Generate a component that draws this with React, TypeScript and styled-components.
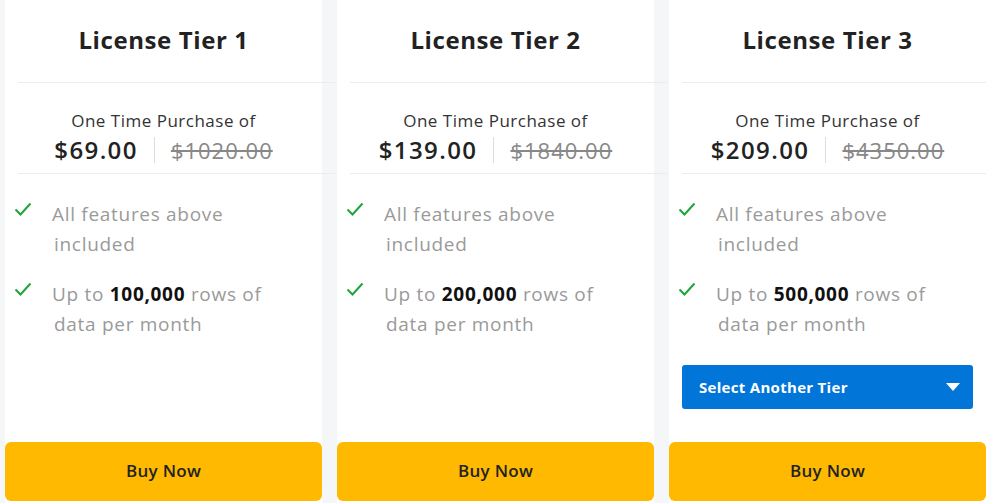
import styled, { createGlobalStyle } from 'styled-components';

const GlobalStyle = createGlobalStyle`
  html, body {
    margin: 0;
    padding: 0;
    background: #f5f6f8;
    overflow: hidden;
  }
  body {
    font-family: 'Open Sans', 'Liberation Sans', sans-serif;
  }
`;

const Page = styled.div`
  display: flex;
  flex-direction: row;
  gap: 15px;
  height: 503px;
  padding-left: 5px;
  box-sizing: border-box;
  background-color: #f5f6f8;
`;

const Card = styled.div`
  display: flex;
  flex-direction: column;
  flex: 0 0 317px;
  width: 317px;
  background-color: #fff;
`;

const Header = styled.div`
  display: flex;
  align-items: center;
  justify-content: center;
  height: 82px;
  padding-bottom: 4px;
  box-sizing: border-box;
`;

const Title = styled.h2`
  margin: 0;
  font-size: 24px;
  font-weight: 700;
  color: #222;
  letter-spacing: 0.6px;
`;

const Divider = styled.div`
  position: relative;
  z-index: 1;
  margin-left: 13px;
  width: 100%;
  height: 1px;
  background-color: #ececec;
`;

const PriceBlock = styled.div`
  display: flex;
  flex-direction: column;
  align-items: center;
  padding: 28px 0 9px;
`;

const Caption = styled.span`
  font-size: 17px;
  line-height: 20px;
  color: #333;
  letter-spacing: 0.5px;
`;

const PriceRow = styled.div`
  display: flex;
  flex-direction: row;
  align-items: center;
  margin-top: 5px;
  height: 28px;
`;

const Price = styled.span`
  font-size: 24px;
  font-weight: 600;
  color: #222;
  letter-spacing: 1.4px;
  padding-right: 16px;
  border-right: 1px solid #ddd;
  line-height: 26px;
`;

const OldPrice = styled.span`
  font-size: 22px;
  color: #888;
  letter-spacing: 1px;
  padding-left: 16px;
  text-decoration: line-through;
  line-height: 26px;
`;

const Features = styled.ul`
  display: flex;
  flex-direction: column;
  gap: 20px;
  list-style: none;
  margin: 0;
  padding: 25px 9px 0;
`;

const Feature = styled.li`
  display: flex;
  flex-direction: row;
  align-items: flex-start;
  gap: 20px;
`;

const Check = styled.svg`
  flex: 0 0 18px;
  margin-top: 3px;
`;

const FeatureText = styled.span`
  font-size: 19px;
  line-height: 30px;
  letter-spacing: 0.7px;
  color: #9a9a9a;
  padding-left: 2px;
  text-indent: -2px;

  & b {
    color: #111;
    font-weight: 700;
  }
`;

const Select = styled.button`
  display: flex;
  align-items: center;
  justify-content: space-between;
  margin: 26px 13px 0;
  height: 44px;
  padding: 0 13px 0 17px;
  border: none;
  border-radius: 3px;
  background-color: #0275d8;
  color: #fff;
  font-family: 'Open Sans', 'Liberation Sans', sans-serif;
  font-size: 15px;
  font-weight: 700;
  letter-spacing: 0.3px;
`;

const BuyButton = styled.button`
  margin-top: auto;
  margin-bottom: 2px;
  height: 59px;
  padding: 0 0 3px;
  border: none;
  border-radius: 6px;
  background-color: #ffb900;
  color: #222;
  font-family: 'Open Sans', 'Liberation Sans', sans-serif;
  font-size: 17px;
  font-weight: 600;
  letter-spacing: 0.3px;
`;

const tiers = [
  { name: 'License Tier 1', price: '$69.00', old: '$1020.00', rows: '100,000', select: false },
  { name: 'License Tier 2', price: '$139.00', old: '$1840.00', rows: '200,000', select: false },
  { name: 'License Tier 3', price: '$209.00', old: '$4350.00', rows: '500,000', select: true },
];

const CheckIcon = () => (
  <Check width="18" height="14" viewBox="0 0 18 14">
    <path d="M1.5 7.5 L6.5 12.5 L16.5 1.5" fill="none" stroke="#1fa33a" strokeWidth="2" />
  </Check>
);

export default function App() {
  return (
    <>
      <GlobalStyle />
      <Page>
        {tiers.map((t) => (
          <Card key={t.name}>
            <Header>
              <Title>{t.name}</Title>
            </Header>
            <Divider />
            <PriceBlock>
              <Caption>One Time Purchase of</Caption>
              <PriceRow>
                <Price>{t.price}</Price>
                <OldPrice>{t.old}</OldPrice>
              </PriceRow>
            </PriceBlock>
            <Divider />
            <Features>
              <Feature>
                <CheckIcon />
                <FeatureText>
                  All features above
                  <br />
                  included
                </FeatureText>
              </Feature>
              <Feature>
                <CheckIcon />
                <FeatureText>
                  Up to <b>{t.rows}</b> rows of
                  <br />
                  data per month
                </FeatureText>
              </Feature>
            </Features>
            {t.select && (
              <Select>
                Select Another Tier
                <svg width="14" height="8" viewBox="0 0 14 8">
                  <path d="M0 0 H14 L7 8 Z" fill="#fff" />
                </svg>
              </Select>
            )}
            <BuyButton>Buy Now</BuyButton>
          </Card>
        ))}
      </Page>
    </>
  );
}
